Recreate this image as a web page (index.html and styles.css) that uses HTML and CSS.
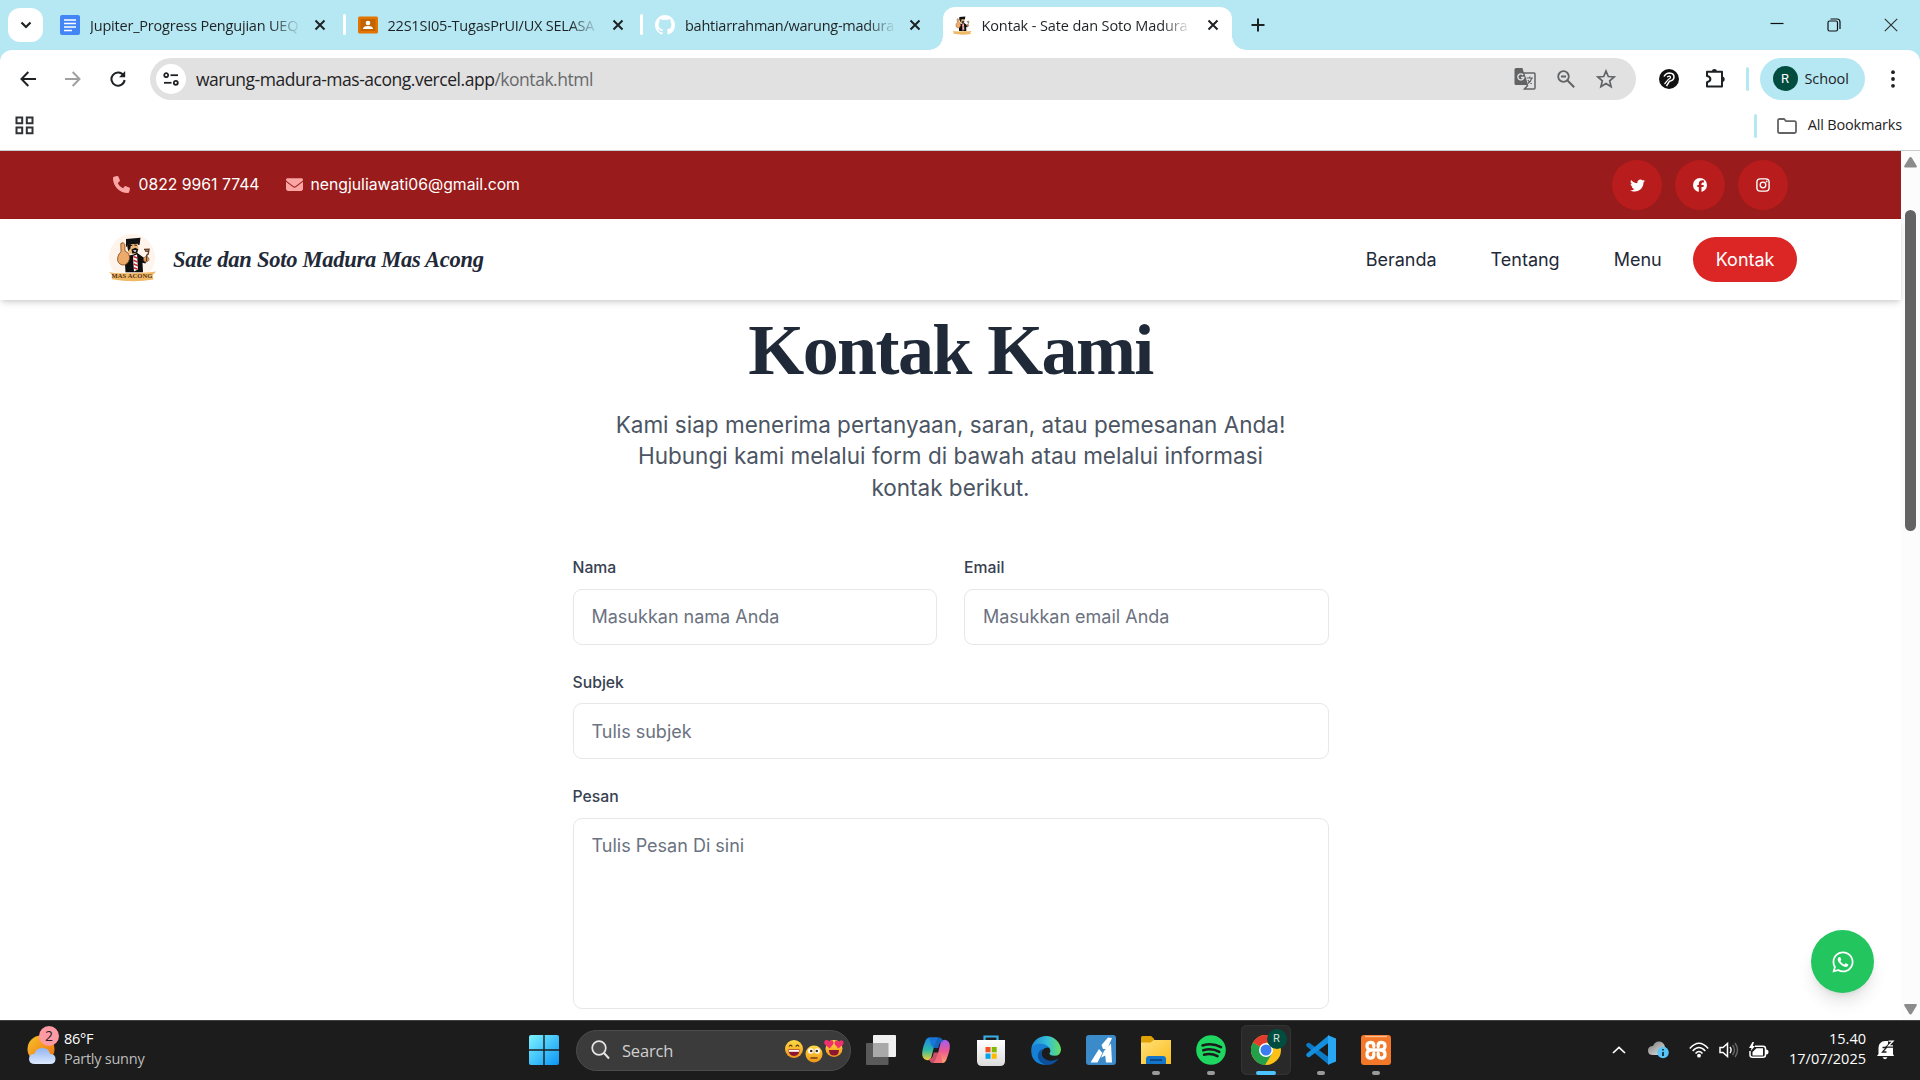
FILE: index.html
```html
<!DOCTYPE html>
<html lang="id">
<head>
<meta charset="utf-8">
<title>Kontak - Sate dan Soto Madura Mas Acong</title>
<link rel="stylesheet" href="styles.css">
</head>
<body>
<svg class="defs" width="0" height="0" aria-hidden="true">
  <defs>
    <linearGradient id="gWin" x1="0" y1="0" x2="1" y2="1"><stop offset="0" stop-color="#7df3ff"/><stop offset="1" stop-color="#0a95f5"/></linearGradient>
    <linearGradient id="gSun" x1="0" y1="0" x2="1" y2="1"><stop offset="0" stop-color="#f8c32c"/><stop offset="1" stop-color="#ee6a10"/></linearGradient>
    <linearGradient id="gCloud" x1="0" y1="0" x2="0" y2="1"><stop offset="0" stop-color="#8fb5f2"/><stop offset="1" stop-color="#dfeaff"/></linearGradient>
    <linearGradient id="gEmo" x1="0" y1="0" x2="0" y2="1"><stop offset="0" stop-color="#ffdc45"/><stop offset="1" stop-color="#ef9418"/></linearGradient>
    <linearGradient id="gCopA" x1="0" y1="0" x2="0" y2="1"><stop offset="0" stop-color="#1a86e8"/><stop offset=".55" stop-color="#2fb9a6"/><stop offset="1" stop-color="#f4cf32"/></linearGradient>
    <linearGradient id="gCopB" x1="0" y1="0" x2="0" y2="1"><stop offset="0" stop-color="#a05cf5"/><stop offset=".5" stop-color="#ee5a90"/><stop offset="1" stop-color="#ffa66a"/></linearGradient>
    <linearGradient id="gEdge" x1="0" y1="0" x2="1" y2="0"><stop offset="0" stop-color="#1b87d8"/><stop offset=".55" stop-color="#35bfd8"/><stop offset="1" stop-color="#68df5e"/></linearGradient>
    <linearGradient id="gFold" x1="0" y1="0" x2="1" y2="1"><stop offset="0" stop-color="#ffe07a"/><stop offset="1" stop-color="#fbbd1e"/></linearGradient>
    <linearGradient id="gBag" x1="0" y1="0" x2="0" y2="1"><stop offset="0" stop-color="#fff"/><stop offset="1" stop-color="#dcdcdc"/></linearGradient>
    <linearGradient id="gCl" x1="0" y1="0" x2="1" y2="1"><stop offset="0" stop-color="#777"/><stop offset="1" stop-color="#eee"/></linearGradient>
    <symbol id="x" viewBox="0 0 12 12"><path d="M1.500 1.500l9 9M10.500 1.500l-9 9" stroke="#1f2224" stroke-width="2" fill="none"/></symbol>
    <symbol id="mascot" viewBox="0 0 47 48">
      <path d="M17 5l14.500-1.300-.9 7-13.600 2z" fill="#111"/>
      <path d="M18 10.500l11-.8.6 6-3.600 4.800-6.500-1z" fill="#f0b878"/>
      <path d="M18 10l4 .2-.6 4-2.200 3z" fill="#111"/>
      <path d="M20.500 11.700l2.800-.5m2-.2l2.600.2" stroke="#111" stroke-width="1.100"/>
      <path d="M22.500 15.500l3.800-1.700 2.800 1.500-.8 3.500-5 .7z" fill="#161616"/>
      <path d="M24 16.300h3.400l-1.200 1.900z" fill="#fff"/>
      <path d="M17 22l7-1.200 4-2 5.500 4 4 2.700-1 4-3-.7.500 9.500H16.500l-.5-8z" fill="#0d0d0d"/>
      <path d="M24 22l4-1.500 1 15-4 2z" fill="#fff"/>
      <path d="M24.300 22.500l4 1.600m-3.800 2.200l4 1.600m-3.700 2.200l4 1.600m-3.800 2l3.600 1.600" stroke="#c92a32" stroke-width="1.600"/>
      <path d="M11.800 9.500q2.800-2.200 4 1l.2 6.500q5 2 4.500 8-1.800 6.500-7.200 6-5.500-1.500-4.600-7.500.8-4 3.300-5.600z" fill="#edaa68" stroke="#7b4421" stroke-width=".8"/>
      <path d="M34.500 24.500q2-3.500 5-.8 1.600 3.200-2.200 4.300-3.300-.4-2.800-3.500z" fill="#edaa68" stroke="#7b4421" stroke-width=".6"/>
      <path d="M35 15.500l5-.3-.8 5-1.500 1-.2 6M36 17l3 .4" stroke="#62402b" stroke-width="1.400" fill="none"/>
      <path d="M0 38q6 1.800 23.500 1.200T47 37.500l-3.300 3.800.6 4.200Q24 49 2.800 45.200L3.500 41z" fill="#efb865"/>
    </symbol>
  </defs>
</svg>

<div class="screen">
  <header class="browser">
    <div class="tabstrip">
      <button class="tab-search"><svg width="12" height="8" viewBox="0 0 12 8"><path d="M1.500 1.500L6 6l4.500-4.500" fill="none" stroke="#1f2224" stroke-width="2.200"/></svg></button>
      <div class="tab">
        <svg class="fav" viewBox="0 0 20 20"><rect width="20" height="20" rx="2" fill="#4285f4"/><path d="M4 5h12M4 8.500h12M4 12h12M4 15.500h8" stroke="#fff" stroke-width="1.700"/></svg>
        <span class="tab-title t1">Jupiter_Progress Pengujian UEQ</span><svg class="close"><use href="#x"/></svg>
      </div>
      <div class="tab sep">
        <svg class="fav" viewBox="0 0 20 20"><rect y="1.500" width="20" height="17" rx="1.500" fill="#e37400"/><rect x="2.500" y="4" width="15" height="12" fill="#c26401"/><circle cx="10" cy="8" r="2.300" fill="#fff"/><path d="M5 14q0-3 5-3t5 3z" fill="#fff"/></svg>
        <span class="tab-title t2">22S1SI05-TugasPrUI/UX SELASA</span><svg class="close"><use href="#x"/></svg>
      </div>
      <div class="tab sep">
        <svg class="fav" viewBox="0 0 16 16"><path fill="#fff" d="M8 0C3.580 0 0 3.580 0 8c0 3.540 2.290 6.530 5.470 7.590.4.070.55-.17.55-.38 0-.19-.01-.82-.01-1.490-2.010.37-2.530-.49-2.690-.94-.09-.23-.48-.94-.82-1.130-.28-.15-.68-.52-.01-.53.630-.01 1.080.58 1.230.82.72 1.210 1.870.87 2.330.66.070-.52.28-.87.510-1.070-1.780-.2-3.640-.89-3.640-3.950 0-.87.310-1.590.82-2.150-.08-.2-.36-1.020.08-2.120 0 0 .67-.21 2.200.82.640-.18 1.320-.27 2-.27s1.360.09 2 .27c1.530-1.040 2.200-.82 2.200-.82.440 1.100.16 1.920.08 2.120.510.56.82 1.270.82 2.150 0 3.070-1.870 3.750-3.650 3.950.29.25.54.73.54 1.480 0 1.070-.01 1.930-.01 2.200 0 .21.15.46.55.38A8.010 8.010 0 0016 8c0-4.420-3.580-8-8-8z"/></svg>
        <span class="tab-title t3">bahtiarrahman/warung-madura</span><svg class="close"><use href="#x"/></svg>
      </div>
      <div class="tab active">
        <svg class="fav" viewBox="0 0 47 48"><use href="#mascot"/></svg>
        <span class="tab-title t4">Kontak - Sate dan Soto Madura</span><svg class="close"><use href="#x"/></svg>
      </div>
      <button class="new-tab"><svg width="14" height="14" viewBox="0 0 14 14"><path d="M7 .5v13M.5 7h13" stroke="#1f2224" stroke-width="2"/></svg></button>
      <div class="win-controls">
        <svg width="14" height="14"><path d="M.5 5.500h13" stroke="#111" stroke-width="1.200"/></svg>
        <svg width="14" height="14" viewBox="0 0 14 14"><rect x="1" y="3" width="9.500" height="10" rx="1.500" fill="none" stroke="#111" stroke-width="1.200"/><path d="M3.500 1h6.500q3 0 3 3v7" fill="none" stroke="#111" stroke-width="1.200"/></svg>
        <svg width="14" height="14"><path d="M.8.8l12.400 12.400M13.200.8L.8 13.200" stroke="#333" stroke-width="1.200"/></svg>
      </div>
    </div>

    <div class="toolbar">
      <div class="nav-icons">
        <svg width="16" height="16" viewBox="0 0 16 16"><path d="M16 8H1.500M8.300 1L1.500 8l6.800 7" fill="none" stroke="#1f2224" stroke-width="2"/></svg>
        <svg width="16" height="16" viewBox="0 0 16 16"><path d="M0 8h14.500M7.700 1l6.800 7-6.800 7" fill="none" stroke="#a0a0a0" stroke-width="2"/></svg>
        <svg width="16" height="16" viewBox="0 0 16 16"><path d="M13.600 4.500A6.600 6.600 0 1 0 14.600 9" fill="none" stroke="#1f2224" stroke-width="2"/><path d="M15.200 0v6.200H9z" fill="#1f2224"/></svg>
      </div>
      <div class="omnibox">
        <span class="site-info"><svg width="16" height="14" viewBox="0 0 16 14"><g fill="none" stroke="#1f2224" stroke-width="1.800"><circle cx="3.200" cy="3.200" r="2"/><path d="M7.500 3.200H15"/><circle cx="12.800" cy="10.800" r="2"/><path d="M1 10.800h7.500"/></g></svg></span>
        <span class="url">warung-madura-mas-acong.vercel.app<span class="path">/kontak.html</span></span>
        <span class="omni-icons">
          <svg width="22" height="22" viewBox="0 0 22 22"><path d="M9.500 5H20q1 0 1 1v14q0 1-1 1H10.500l3-3.500z" fill="none" stroke="#616365" stroke-width="1.500"/><path d="M2 0h6.500l4.800 17H2q-1.500 0-1.500-1.500v-14Q.5 0 2 0z" fill="#616365"/><path d="M9.200 7A3 3 0 1 0 9.800 9.500H7" fill="none" stroke="#e1e1e1" stroke-width="1.400"/><path d="M12.500 10h6.500m-3.200-1.500V10m2 0q-1 3.500-4 5.500m0-3.500q1.800 2.500 4 3.800" stroke="#616365" stroke-width="1.200" fill="none"/></svg>
          <svg width="18" height="18" viewBox="0 0 18 18"><circle cx="6.500" cy="6.500" r="5.300" fill="none" stroke="#616365" stroke-width="1.800"/><path d="M10.500 10.500l6.700 6.700M4 6.500h5" stroke="#616365" stroke-width="2"/></svg>
          <svg width="20" height="20" viewBox="0 0 20 20"><path d="M10 2l2.300 5.500 5.900.5-4.500 3.900 1.400 5.800L10 14.600l-5.100 3.100 1.400-5.800L1.800 8l5.900-.5z" fill="none" stroke="#616365" stroke-width="1.700"/></svg>
        </span>
      </div>
      <div class="ext-icons">
        <svg width="20" height="20" viewBox="0 0 20 20"><circle cx="10" cy="10" r="10" fill="#111"/><path d="M5 7.500Q7 4 10.500 4q4.500.3 4.500 4 0 3.500-4.500 4.200L7.500 17" fill="none" stroke="#fff" stroke-width="1.500"/><path d="M8 8q3.500-2 3.500.2 0 1.300-2 2L5.500 15" fill="none" stroke="#fff" stroke-width="1.200"/></svg>
        <svg width="22" height="22" viewBox="0 0 22 22"><path d="M3 3.800h15v14.700H3v-4.300q3.400-.7 3.400-3.100T3 8z" fill="none" stroke="#1f2224" stroke-width="2" stroke-linejoin="round"/><path d="M7.800 4a2.600 2.900 0 0 1 5.200 0zM18 8.500a2.700 2.700 0 0 1 0 5.400z" fill="#1f2224"/></svg>
      </div>
      <i class="divider"></i>
      <div class="profile"><span class="avatar">R</span><span class="profile-name">School</span></div>
      <svg class="kebab" width="4" height="18"><circle cx="2" cy="2.200" r="1.900"/><circle cx="2" cy="9" r="1.900"/><circle cx="2" cy="15.800" r="1.900"/></svg>
    </div>

    <div class="bookmarks">
      <svg width="19" height="19" viewBox="0 0 19 19"><path d="M1.500 1.500h5.700v5.700H1.500zM11.800 1.500h5.700v5.700h-5.700zM1.500 11.500h5.700v5.700H1.500zM11.800 11.500h5.700v5.700h-5.700z" fill="none" stroke="#303335" stroke-width="2"/></svg>
      <span class="spacer"></span>
      <i class="divider"></i>
      <svg class="bm-folder" width="20" height="16" viewBox="0 0 20 16"><path d="M1 13.500v-11q0-1.500 1.500-1.500H7l2 2.200h8.500q1.500 0 1.500 1.500v8.800q0 1.500-1.500 1.500h-15Q1 15 1 13.500z" fill="none" stroke="#616365" stroke-width="1.800"/></svg>
      <span class="bm-label">All Bookmarks</span>
    </div>
  </header>

  <main class="viewport">
    <div class="page">
      <div class="topbar">
        <div class="contact">
          <svg width="17" height="17" viewBox="0 0 512 512"><path fill="#fca5a5" d="M164.900 24.600c-7.700-18.600-28-28.500-47.400-23.200l-88 24C12.100 30.200 0 46 0 64c0 247.400 200.600 448 448 448 18 0 33.800-12.100 38.600-29.500l24-88c5.300-19.400-4.600-39.700-23.200-47.400l-96-40c-16.300-6.800-35.200-2.100-46.300 11.600L304.700 368C234.300 334.700 177.300 277.700 144 207.300l49.300-40.300c13.700-11.200 18.400-30 11.600-46.300l-40-96z"/></svg>
          <span class="phone">0822 9961 7744</span>
          <svg class="mail" width="17" height="13" viewBox="0 0 512 384"><path fill="#fca5a5" d="M48 0C21.500 0 0 21.500 0 48c0 15.100 7.100 29.300 19.200 38.400l217.600 163.200c11.400 8.500 27 8.500 38.400 0L492.800 86.400C504.900 77.300 512 63.100 512 48c0-26.500-21.500-48-48-48zM0 112v208c0 35.300 28.700 64 64 64h384c35.300 0 64-28.700 64-64V112L294.400 275.200c-22.800 17.100-54 17.100-76.800 0z"/></svg>
          <span class="email">nengjuliawati06@gmail.com</span>
        </div>
        <div class="social">
          <a><svg width="15" height="15" viewBox="0 0 512 512"><path fill="#fff" d="M459.400 151.700c.3 4.500.3 9.100.3 13.600 0 138.700-105.600 298.600-298.600 298.600-59.500 0-114.700-17.200-161.100-47.100 8.400 1 16.600 1.300 25.300 1.300 49.100 0 94.200-16.600 130.300-44.800-46.100-1-84.800-31.200-98.100-72.800 6.500 1 13 1.600 19.800 1.600 9.400 0 18.800-1.300 27.600-3.600-48.100-9.700-84.100-52-84.100-103v-1.300c14 7.800 30.200 12.700 47.400 13.300-28.300-18.800-46.800-51-46.800-87.400 0-19.500 5.200-37.400 14.300-53 51.700 63.700 129.300 105.300 216.400 109.800-1.600-7.800-2.600-15.900-2.600-24 0-57.800 46.800-104.900 104.900-104.900 30.200 0 57.500 12.700 76.700 33.100 23.700-4.500 46.500-13.300 66.600-25.300-7.800 24.400-24.400 44.800-46.100 57.800 21.100-2.300 41.600-8.100 60.400-16.200-14.300 20.800-32.200 39.300-52.600 54.300z"/></svg></a>
          <a><svg width="14" height="14" viewBox="0 0 512 512"><circle cx="256" cy="256" r="256" fill="#fff"/><path d="M212 512V330h-54v-78h54v-35c0-91 41-133 130-133 17 0 46 3 58 7v71c-6-1-17-1-30-1-44 0-61 17-61 60v31h87l-15 78h-72v182z" fill="#b91c1c"/></svg></a>
          <a><svg width="14" height="14" viewBox="0 0 14 14"><rect x=".9" y=".9" width="12.200" height="12.200" rx="3.400" fill="none" stroke="#fff" stroke-width="1.400"/><circle cx="7" cy="7" r="2.800" fill="none" stroke="#fff" stroke-width="1.300"/><circle cx="10.700" cy="3.400" r=".9" fill="#fff"/></svg></a>
        </div>
      </div>

      <nav class="navbar">
        <div class="brand">
          <span class="logo"><svg width="47" height="48" viewBox="0 0 47 48"><use href="#mascot"/></svg><b class="logo-name">MAS ACONG</b></span>
          <span class="brand-name">Sate dan Soto Madura Mas Acong</span>
        </div>
        <div class="links"><a>Beranda</a><a>Tentang</a><a>Menu</a><a class="current">Kontak</a></div>
      </nav>

      <section class="contact-section">
        <h1>Kontak Kami</h1>
        <p class="lead">Kami siap menerima pertanyaan, saran, atau pemesanan Anda!<br>Hubungi kami melalui form di bawah atau melalui informasi<br>kontak berikut.</p>
        <form>
          <label>Nama<input type="text" placeholder="Masukkan nama Anda"></label>
          <label>Email<input type="text" placeholder="Masukkan email Anda"></label>
          <label class="wide">Subjek<input type="text" placeholder="Tulis subjek"></label>
          <label class="wide">Pesan<textarea placeholder="Tulis Pesan Di sini"></textarea></label>
        </form>
      </section>
      <a class="whatsapp"><svg width="24" height="24" viewBox="0 0 448 512"><path fill="#fff" d="M380.900 97.100C339 55.100 283.200 32 223.900 32c-122.400 0-222 99.600-222 222 0 39.100 10.200 77.300 29.600 111L0 480l117.700-30.900c32.400 17.700 68.900 27 106.100 27h.1c122.300 0 224.100-99.600 224.100-222 0-59.300-25.200-115-67.100-157zm-157 341.600c-33.200 0-65.700-8.900-94-25.700l-6.700-4-69.800 18.300L72 359.200l-4.400-7c-18.500-29.400-28.200-63.300-28.200-98.200 0-101.700 82.800-184.500 184.600-184.500 49.300 0 95.600 19.200 130.400 54.100 34.800 34.900 56.200 81.200 56.100 130.500 0 101.800-84.900 184.600-186.600 184.600zm101.200-138.200c-5.500-2.800-32.800-16.200-37.900-18-5.100-1.900-8.800-2.800-12.500 2.800-3.700 5.600-14.300 18-17.600 21.800-3.200 3.700-6.500 4.200-12 1.400-32.600-16.300-54-29.100-75.500-66-5.700-9.800 5.700-9.100 16.300-30.300 1.800-3.700.9-6.900-.5-9.700-1.400-2.800-12.500-30.100-17.100-41.200-4.500-10.800-9.100-9.300-12.500-9.500-3.200-.2-6.900-.2-10.600-.2-3.700 0-9.700 1.400-14.800 6.900-5.100 5.600-19.400 19-19.400 46.300 0 27.300 19.900 53.700 22.600 57.400 2.800 3.700 39.100 59.700 94.800 83.800 35.200 15.200 49 16.500 66.600 13.900 10.700-1.600 32.800-13.400 37.400-26.400 4.600-13 4.600-24.100 3.200-26.400-1.300-2.500-5-3.900-10.500-6.600z"/></svg></a>
    </div>
    <div class="scrollbar">
      <svg width="13" height="11" viewBox="0 0 13 11"><path d="M6.500 0q.8 0 1.300.8l4.800 8q.8 1.700-.9 1.700H1.300Q-.4 10.500.4 8.800L5.200.8Q5.700 0 6.500 0z" fill="#8b8b8b"/></svg>
      <i class="thumb"></i>
      <svg class="down" width="13" height="11" viewBox="0 0 13 11"><path d="M6.500 10.500q.8 0 1.300-.8l4.800-8Q13.400 0 11.700 0H1.300Q-.4 0 .4 1.700l4.800 8q.5.8 1.300.8z" fill="#8b8b8b"/></svg>
    </div>
  </main>

  <footer class="taskbar">
    <div class="weather">
      <span class="weather-icon">
        <svg width="30" height="30" viewBox="0 0 30 30"><circle cx="14" cy="14" r="13.500" fill="url(#gSun)"/><path d="M8 29q-6 0-6-5t5.500-5.200Q9 13 15.500 13T23 19q5.500 0 5.500 5T23 29z" fill="url(#gCloud)"/></svg>
        <b class="badge">2</b>
      </span>
      <span class="weather-text"><span class="temp">86°F</span><span class="cond">Partly sunny</span></span>
    </div>
    <div class="task-center">
      <svg class="start" width="30" height="30" viewBox="0 0 30 30"><path d="M2 0h12.300v14.300H0V2q0-2 2-2zM15.700 0H28q2 0 2 2v12.300H15.700zM0 15.700h14.300V30H2q-2 0-2-2zM15.700 15.700H30V28q0 2-2 2H15.700z" fill="url(#gWin)"/></svg>
      <div class="search">
        <svg width="19" height="20" viewBox="0 0 19 20"><circle cx="8" cy="8" r="6.800" fill="#4d4d4d" stroke="#e6e6e6" stroke-width="1.700"/><path d="M13 13l5 5.500" stroke="#e6e6e6" stroke-width="2"/></svg>
        <span class="search-label">Search</span>
        <svg class="emojis" width="60" height="26" viewBox="0 0 60 26">
          <circle cx="10" cy="12" r="9" fill="url(#gEmo)"/><path d="M4.500 12.500h11q0 6.500-5.500 6.500t-5.500-6.500z" fill="#8c1531"/><path d="M5 13h10v1.800H5z" fill="#fff"/><path d="M5 9.500q1.700-2.800 3.200 0M11.800 9.500q1.700-2.800 3.200 0" stroke="#5b3517" stroke-width="1.300" fill="none"/>
          <circle cx="30" cy="17" r="8.500" fill="url(#gEmo)"/><circle cx="26.800" cy="14" r="2.700" fill="#fff"/><circle cx="33.200" cy="14" r="2.700" fill="#fff"/><circle cx="27.200" cy="14" r="1.300" fill="#432"/><circle cx="32.800" cy="14" r="1.300" fill="#432"/><path d="M26.500 21h7" stroke="#5b3517" stroke-width="1.300"/>
          <circle cx="50" cy="11.500" r="8.500" fill="url(#gEmo)"/><path d="M45 13h10q0 5.500-5 5.500T45 13z" fill="#8c1531"/><path d="M45.600 11.500l-4.800-4q-1.600-3.200 1-4.600 2-.7 3.300 1.500 1.700-2 3.600-.6 1.600 1.600.2 4zM54.400 11.500l-3.400-3.700q-1.300-3.200.8-4 2-.6 3 1.200 1.400-2.400 3.400-1.500 2.400 1.500.8 4z" fill="#f0306a"/>
        </svg>
      </div>
      <div class="apps">
        <span class="app"><svg width="30" height="30" viewBox="0 0 30 30"><rect y="8" width="22.500" height="22" rx="1" fill="#5a5a5a"/><rect x="7" width="23" height="22" rx="1" fill="#f0f0f0"/><path d="M7 8h15.500v14H7z" fill="#a9a9a9"/></svg></span>
        <span class="app"><svg width="30" height="30" viewBox="0 0 30 30"><path d="M8.500 2.500H17l-4 9-2.300 9.500q-.9 4-4.200 4.300Q2 25 1.200 20 .8 15 4 7q1.300-4.500 4.500-4.500z" fill="url(#gCopA)"/><path d="M21.500 28H13l4-9.500L19.300 9q.9-4 4.200-4.300 4.500.3 5.300 5.300.4 5-2.800 13-1.300 5-4.500 5z" fill="url(#gCopB)"/><path d="M8.500 2.500H18q3 0 4.300 4.200-3.300-.2-4.300 3.300l-.8 3h-4.700L10 10z" fill="#1671d8" opacity=".85"/><path d="M21.500 28H12q-3 0-4.300-4.200 3.300.2 4.300-3.300l.8-3h4.700L20 21z" fill="#f2607a" opacity=".8"/></svg></span>
        <span class="app"><svg width="30" height="31" viewBox="0 0 30 31"><path d="M8.500 7V1.500h13V7" fill="none" stroke="#3aaee8" stroke-width="2.200"/><path d="M1 5h28v21q0 5-5 5H6q-5 0-5-5z" fill="url(#gBag)"/><path d="M9.500 12h5v5.300h-5z" fill="#f25022"/><path d="M15.700 12h5v5.300h-5z" fill="#7fba00"/><path d="M9.500 18.500h5v5.300h-5z" fill="#00a4ef"/><path d="M15.700 18.500h5v5.300h-5z" fill="#ffb900"/></svg></span>
        <span class="app"><svg width="30" height="30" viewBox="0 0 30 30"><path d="M.2 14A15 15 0 0 1 30 14.500q-.3 6.300-6.500 6.300-4.800 0-5-2.200 1.800-2.600.2-5Q16.800 10.500 12 10.500 4 10.500.2 14z" fill="url(#gEdge)"/><path d="M.2 14.500Q2.500 8.700 9 8.700q6.500 0 9.500 4.300-2-.9-4.500 0Q9.500 15.500 10.500 20q1.800 6.500 8 7.700-2 1.900-5.500 2Q0 28.500.2 14.500z" fill="#1680d4"/><path d="M12 13.500q-3 3-1 7.500 4 5.800 11.500 4.500 3-.8 5.300-2.300Q23.500 30 16 30 7 28 6.800 21q.2-5.500 5.200-7.500z" fill="#0c4f9c"/></svg></span>
        <span class="app"><svg width="30" height="30" viewBox="0 0 30 30"><rect width="30" height="30" rx="3" fill="#3b8bcb"/><path d="M15.500 10L22 2.500l4 .5-3.500 8-2.500 3h-3zM4.500 27.500L13 14l3.500 4-5 9.500zM18 16l7-7.500 1 19h-6l-.8-7-4.200 2.300z" fill="#fff"/></svg></span>
        <span class="app run"><svg width="30" height="28" viewBox="0 0 30 28"><path d="M0 10V1.500Q0 0 1.500 0h8.700l3 3v7z" fill="#e0a106"/><path d="M0 6.500h9.500L13 4h17v24H0z" fill="url(#gFold)"/><path d="M5 28v-5q0-3 3-3h14q3 0 3 3v5z" fill="#1575c8"/><path d="M9 24h12" stroke="#063e78" stroke-width="1.500"/></svg></span>
        <span class="app run"><svg width="30" height="30" viewBox="0 0 30 30"><circle cx="15" cy="15" r="14.800" fill="#1ed760"/><path d="M6.500 10.500q10-3 18.500 1.700M7.300 15.300q8.500-2.500 16 1.600M8 19.700q7.300-2 13.500 1.500" fill="none" stroke="#1b1b1b" stroke-width="2.500" stroke-linecap="round"/></svg></span>
        <span class="app current-app"><svg width="30" height="30" viewBox="0 0 30 30"><circle cx="15" cy="15" r="15" fill="#fbc116"/><path d="M15 15L2 7.500A15 15 0 0 0 14 30l7.500-12z" fill="#25a04a"/><path d="M15 15L2 7.500A15 15 0 0 1 28 7.500H15z" fill="#e33b2e"/><circle cx="15" cy="15" r="7" fill="#fff"/><circle cx="15" cy="15" r="5.500" fill="#3b7df0"/></svg><b class="app-badge">R</b></span>
        <span class="app run"><svg width="30" height="30" viewBox="0 0 30 30"><path d="M1 8.500q1.300-1.300 2.600-.5L23 22.500V30L.8 11.500Q-.5 10 1 8.500z" fill="#0b7bc9"/><path d="M1 21.500q1.300 1.300 2.600.5L23 7.500V0L.8 18.500Q-.5 20 1 21.500z" fill="#148fdf"/><path d="M22 .2L30 3.500v23L22 29.800z" fill="#2aa7f2"/></svg></span>
        <span class="app run"><svg width="30" height="30" viewBox="0 0 30 30"><rect width="30" height="30" rx="3" fill="#f3782a"/><path d="M4 1.500h22" stroke="#ffb98a" stroke-width="1.400"/><path d="M12.800 11.500V9.500Q12.300 7.300 9.500 7.300 6 7.500 6 11q0 4 4.500 4h9Q24 15 24 11q0-3.500-3.500-3.700-2.800 0-3.300 2.200v2M12.800 18.500v2q-.5 2.700-3.300 2.700Q6 23 6 19.500 6 15 10.500 15h9q4.500 0 4.500 4.500 0 3.500-3.500 3.700-2.800 0-3.300-2.700v-2" fill="none" stroke="#fff" stroke-width="3.300" stroke-linecap="round"/></svg></span>
      </div>
    </div>
    <div class="tray">
      <svg class="chev" width="14" height="8" viewBox="0 0 14 8"><path d="M1 7l6-5.700L13 7" fill="none" stroke="#fff" stroke-width="1.700"/></svg>
      <svg class="cloud" width="22" height="18" viewBox="0 0 22 18"><path d="M5 14q-5 0-5-4.500T5 5Q7 0 11.500.5T17 6q3 1 2.500 8z" fill="url(#gCl)"/><circle cx="15" cy="11.500" r="5.800" fill="#56c5f7"/><path d="M15 11v4M15 8v1.600" stroke="#123" stroke-width="1.700"/></svg>
      <svg class="wifi" width="20" height="16" viewBox="0 0 20 16"><g fill="none" stroke="#fff" stroke-width="1.500"><path d="M.8 6.500q9.200-10.500 18.400 0M3.700 9q6.300-7 12.600 0M6.500 11.600q3.500-4 7 0"/></g><circle cx="10" cy="13.700" r="1.900" fill="#fff"/></svg>
      <svg class="vol" width="20" height="16" viewBox="0 0 20 16"><path d="M1 5.500h3L8.500 1.500v13L4 10.500H1z" fill="none" stroke="#fff" stroke-width="1.500"/><path d="M11 5q2.200 3 0 6" fill="none" stroke="#fff" stroke-width="1.400"/><path d="M13.500 3q4 5 0 10M16 1q5 7 0 14" fill="none" stroke="#666" stroke-width="1.400"/></svg>
      <svg class="bat" width="20" height="17" viewBox="0 0 20 17"><path d="M6 4.300h8q2.500 0 2.500 2.500v6q0 2.500-2.500 2.500H3.500Q1 15.300 1 12.800V9" fill="none" stroke="#fff" stroke-width="1.500"/><path d="M7.500 6.300H14v7.200H3.500V10zM17 7.500q2.500 0 2.500 2.500T17 12.500zM3.500 0L0 6h2.500L1.800 9 6 4H3.800L5 0z" fill="#fff"/></svg>
      <div class="clock"><span>15.40</span><span>17/07/2025</span></div>
      <svg class="bell" width="18" height="20" viewBox="0 0 18 20"><path d="M1.500 14V7.500Q2 1.500 8 1h3v4h5v9l1 2H0zM5.500 17.200h5q-2.500 4-5 0z" fill="#fff"/><path d="M5.500 7.500h4l-4 4.500h4" fill="none" stroke="#1c1c1c" stroke-width="1.300"/><path d="M11 1.200h5l-5 5h5" fill="none" stroke="#1c1c1c" stroke-width="3"/><path d="M11.500 1.200h4.500l-4.500 4.600h4.500" fill="none" stroke="#fff" stroke-width="1.300"/></svg>
    </div>
  </footer>
</div>
</body>
</html>
```
FILE: styles.css
```css
* { box-sizing: border-box; }
body { margin: 0; }
.defs { position: absolute; }
svg { display: block; flex: none; }
button { border: 0; padding: 0; background: none; }
.screen { width: 1920px; height: 1080px; overflow: hidden; display: flex; flex-direction: column; background: #fff; font-family: "Open Sans", "Noto Sans", sans-serif; }

/* browser chrome */
.browser { height: 151px; flex: none; background: #b5e8f3; border-bottom: 1px solid #c9cdcf; }
.tabstrip { height: 50px; display: flex; align-items: center; padding-left: 8px; }
.tab-search { width: 35px; height: 34px; border-radius: 12px; background: #fff; display: grid; place-items: center; margin-right: 3.500px; }
.tab { width: 297.500px; height: 50px; flex: none; display: flex; align-items: center; padding-left: 13.500px; position: relative; }
.tab.sep::before { content: ""; position: absolute; left: -1.500px; top: 14px; width: 3px; height: 21px; border-radius: 2px; background: #fff; }
.fav { width: 20px; height: 20px; margin-right: 10px; }
.tab-title { width: 209px; padding-top: 1px; overflow: hidden; white-space: nowrap; font-size: 14.500px; line-height: 22px; color: #1f2224; -webkit-mask-image: linear-gradient(90deg, #000 87%, transparent 101%); mask-image: linear-gradient(90deg, #000 87%, transparent 101%); }
.t1 { letter-spacing: -.2px; }
.t2 { letter-spacing: -.22px; }
.t3 { letter-spacing: -.26px; }
.t4 { letter-spacing: -.12px; }
.close { width: 12px; height: 12px; margin-left: 15px; }
.tab.active { width: 289px; height: 43px; margin: 7px 8px 0 3.500px; padding-left: 9px; border-radius: 12px 12px 0 0; background: #fff; }
.tab.active .tab-title { width: 207px; margin-top: -7px; }
.tab.active .close { margin-left: 18px; }
.tab.active .fav, .tab.active .close { margin-top: -7px; }
.tab.active::before, .tab.active::after { content: ""; position: absolute; bottom: 0; width: 14px; height: 14px; }
.tab.active::before { left: -14px; background: radial-gradient(circle at 0 0, transparent 13.500px, #fff 14px); }
.tab.active::after { right: -14px; background: radial-gradient(circle at 100% 0, transparent 13.500px, #fff 14px); }
.new-tab { margin-left: 11px; }
.win-controls { margin-left: auto; display: flex; gap: 43px; padding-right: 22px; }

.toolbar { height: 51px; display: flex; align-items: center; padding: 6px 25px 0 20px; background: #fff; border-radius: 12px 12px 0 0; }
.nav-icons { display: flex; gap: 29px; }
.omnibox { width: 1486px; height: 42px; margin-left: 24px; border-radius: 21px; background: #e1e1e1; display: flex; align-items: center; padding: 0 20px 0 6px; }
.site-info { width: 30px; height: 30px; border-radius: 50%; background: #fff; display: grid; place-items: center; }
.url { margin-left: 10px; font-size: 17.500px; line-height: 24px; letter-spacing: -.47px; color: #1f2224; }
.path { color: #66696b; }
.omni-icons { margin-left: auto; display: flex; align-items: center; gap: 21px; }
.ext-icons { display: flex; align-items: center; gap: 25px; margin-left: 23px; }
.divider { width: 2.500px; height: 24px; border-radius: 2px; background: #b5e8f3; margin-left: 20px; }
.profile { width: 105px; height: 42px; margin-left: 11px; border-radius: 21px; background: #b5e8f3; display: flex; align-items: center; padding-left: 13px; }
.avatar { width: 25px; height: 25px; border-radius: 50%; background: #004d40; color: #fff; font: 13px Roboto, sans-serif; display: grid; place-items: center; }
.profile-name { margin-left: 7px; font-size: 14.500px; letter-spacing: -.1px; color: #1f2224; }
.kebab { margin-left: auto; fill: #1f2224; }
.bookmarks { height: 49px; background: #fff; display: flex; align-items: center; padding: 0 18px 0 15px; }
.bm-folder { margin: 0 11px 0 20px; }
.spacer { flex: 1; }
.bm-label { font-size: 14.500px; letter-spacing: -.18px; color: #1f2224; margin-top: -2px; }

/* web page */
.viewport { height: 869px; flex: none; display: flex; }
.page { width: 1901px; background: #fff; font-family: Inter, "Noto Sans", sans-serif; position: relative; }
.topbar { height: 68px; background: #991b1b; display: flex; align-items: center; justify-content: space-between; padding: 0 113px; }
.contact { display: flex; align-items: center; color: #fff; font-size: 15.750px; margin-top: -2px; }
.phone { margin-left: 8.500px; }
.mail { margin-left: 26px; }
.email { margin-left: 8px; }
.social { display: flex; gap: 13px; }
.social a { width: 50px; height: 50px; border-radius: 50%; background: #b91c1c; display: grid; place-items: center; }
.navbar { height: 81px; display: flex; align-items: center; justify-content: space-between; padding: 0 104px 0 109px; background: #fff; box-shadow: 0 4px 7px -1px rgba(0,0,0,.13), 0 2px 5px -2px rgba(0,0,0,.12); }
.brand { display: flex; align-items: center; }
.logo { width: 46px; height: 47px; border-radius: 50%; background: #fff4eb; position: relative; margin-top: -4px; }
.logo-name { position: absolute; left: 0; right: 0; top: 38px; text-align: center; font: bold 6.500px "Liberation Serif", serif; letter-spacing: .1px; white-space: nowrap; color: #54301b; }
.brand-name { margin-left: 18px; font: italic bold 22.500px "Liberation Serif", serif; color: #1f2937; white-space: nowrap; letter-spacing: -.26px; }
.links { display: flex; align-items: center; gap: 9px; font-size: 18px; color: #1f2937; }
.links a { height: 45px; line-height: 45px; padding: 0 22.500px; border-radius: 23px; }
.links .current { background: #dc2626; color: #fff; }
.contact-section { width: 756px; margin: 0 auto; }
h1 { margin: 12px 0 0; height: 76px; line-height: 76px; text-align: center; font-family: "Liberation Serif", serif; font-weight: bold; font-size: 72px; letter-spacing: -1.600px; color: #1f2937; white-space: nowrap; }
.lead { margin: 20.500px 0 0; text-align: center; font-size: 22.500px; line-height: 31.500px; color: #4b5563; white-space: nowrap; }
form { margin-top: 54px; display: grid; grid-template-columns: 1fr 1fr; column-gap: 27px; row-gap: 27px; }
label { display: block; font-size: 15.750px; font-weight: 500; line-height: 22.500px; color: #374151; }
.wide { grid-column: span 2; }
input, textarea { display: block; width: 100%; height: 56px; margin: 9px 0 0; padding: 13px 18px; border: 1px solid #e5e7eb; border-radius: 9px; background: #fff; font: 18px/27px Inter, sans-serif; resize: none; outline: 0; }
textarea { height: 191px; }
::placeholder { color: #6b7280; opacity: 1; }
.whatsapp { position: absolute; right: 27px; bottom: 27px; width: 63px; height: 63px; border-radius: 50%; background: #22c55e; display: grid; place-items: center; box-shadow: 0 11px 17px -3px rgba(0,0,0,.12), 0 4px 7px -4px rgba(0,0,0,.12); }
.scrollbar { width: 19px; background: #fcfcfc; display: flex; flex-direction: column; align-items: center; padding-top: 6px; }
.thumb { width: 11px; height: 321px; margin-top: 42px; border-radius: 6px; background: #636363; }
.down { margin: auto 0 5px; }

/* taskbar */
.taskbar { height: 60px; padding-bottom: 1px; background: #1c1c1c; border-top: 1px solid #414141; display: flex; align-items: center; justify-content: space-between; color: #fff; }
.weather { width: 529px; display: flex; padding-left: 27px; }
.weather-icon { position: relative; width: 30px; height: 36px; padding-top: 5px; }
.badge { position: absolute; left: 12px; top: -4px; width: 20px; height: 20px; border-radius: 50%; background: #ff99a4; color: #222; font: 14px/20px "Open Sans", sans-serif; text-align: center; }
.weather-text { margin: -1px 0 1px 7px; display: flex; flex-direction: column; font-size: 14.500px; line-height: 20px; letter-spacing: -.25px; }
.cond { color: #bdbdbd; }
.task-center { flex: 1; display: flex; align-items: center; }
.search { width: 275px; height: 41px; margin: 0 2px 0 17px; border-radius: 21px; background: #3b3b3b; border: 1px solid #4c4c4c; display: flex; align-items: center; padding-left: 14px; }
.search-label { margin-left: 12px; font-size: 16.500px; letter-spacing: -.2px; color: #cfcfcf; }
.emojis { margin-left: auto; margin-right: 6px; }
.apps { display: flex; }
.app { position: relative; width: 50px; height: 50px; margin: 0 2.500px; display: grid; place-items: center; border-radius: 6px; }
.run::after, .current-app::after { content: ""; position: absolute; bottom: 0; left: 21px; width: 8px; height: 4px; border-radius: 2px; background: #9a9a9a; }
.current-app { background: #292929; box-shadow: inset 0 0 0 1px #333; }
.current-app::after { left: 15px; width: 20px; background: #4cc2ff; }
.app-badge { position: absolute; left: 26px; top: 4px; width: 20px; height: 20px; border-radius: 50%; background: #004d40; color: #d5e2df; font: 11px/20px Roboto, sans-serif; text-align: center; }
.tray { display: flex; align-items: center; padding-right: 25px; }
.cloud { margin-left: 22px; }
.wifi { margin-left: 19px; }
.vol { margin-left: 10px; }
.bat { margin-left: 10px; }
.clock { width: 97px; margin-top: -2px; display: flex; flex-direction: column; align-items: flex-end; font-size: 14.500px; line-height: 20px; letter-spacing: 0; }
.bell { margin-left: 11px; }
```
